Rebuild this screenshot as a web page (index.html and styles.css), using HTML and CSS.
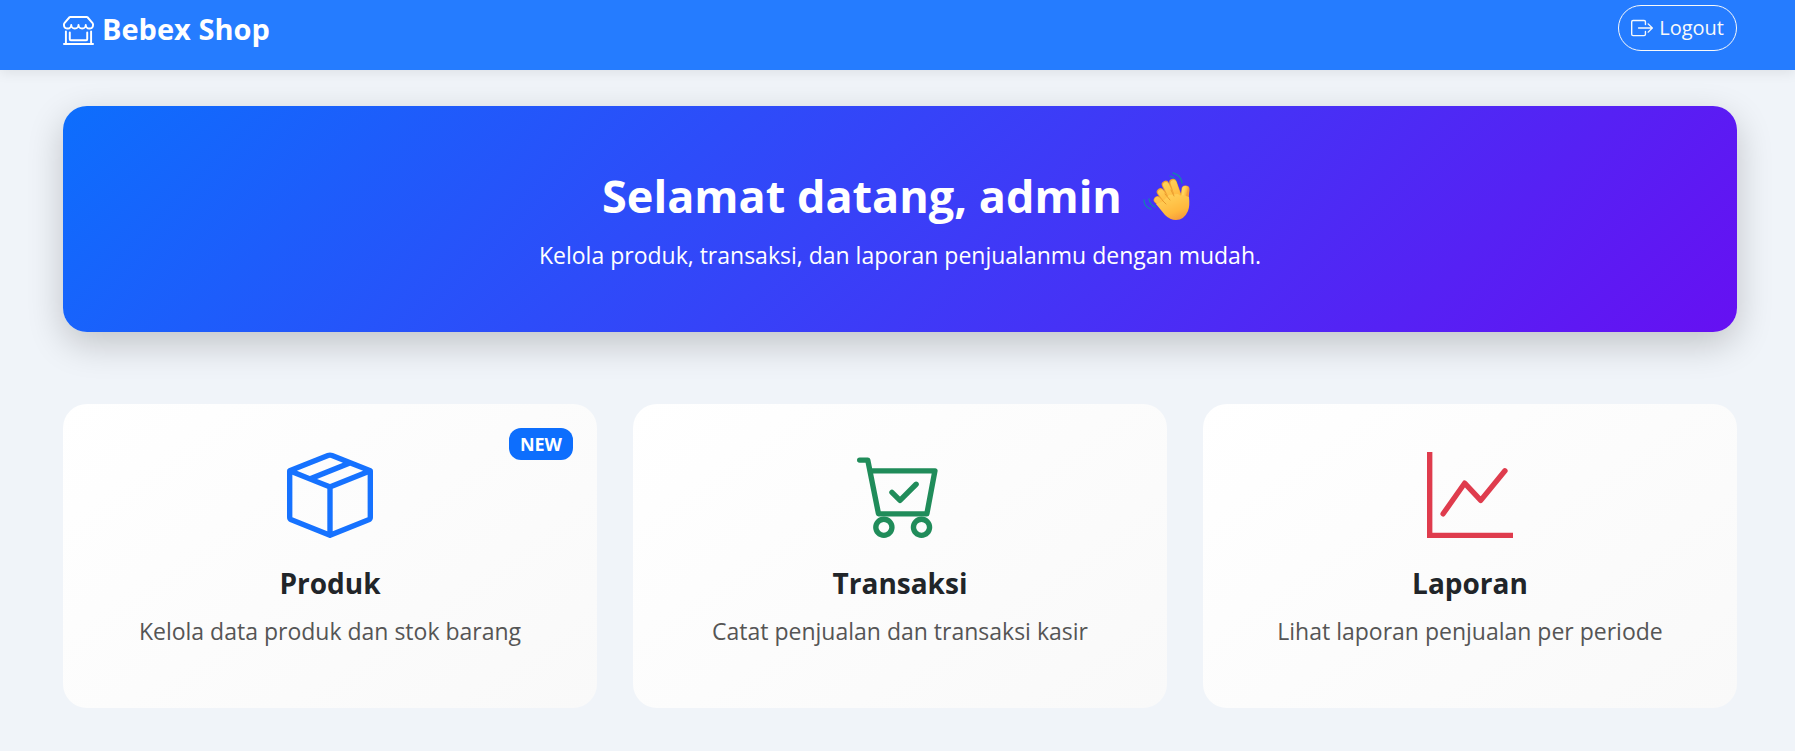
FILE: index.html
```html
<!DOCTYPE html>
<html lang="id">
<head>
<meta charset="utf-8">
<meta name="viewport" content="width=device-width, initial-scale=1">
<title>Bebex Shop</title>
<link rel="stylesheet" href="styles.css">
</head>
<body>
<header class="navbar">
  <a class="brand" href="#">
    <svg class="brand-icon" viewBox="0 0 16 16" fill="currentColor" aria-hidden="true"><path d="M2.97 1.35A1 1 0 0 1 3.73 1h8.54a1 1 0 0 1 .76.35l2.609 3.044A1.5 1.5 0 0 1 16 5.37v.255a2.375 2.375 0 0 1-4.25 1.458A2.37 2.37 0 0 1 9.875 8 2.37 2.37 0 0 1 8 7.083 2.37 2.37 0 0 1 6.125 8a2.37 2.37 0 0 1-1.875-.917A2.375 2.375 0 0 1 0 5.625V5.37a1.5 1.5 0 0 1 .361-.976zm1.78 4.275a1.375 1.375 0 0 0 2.75 0 .5.5 0 0 1 1 0 1.375 1.375 0 0 0 2.75 0 .5.5 0 0 1 1 0 1.375 1.375 0 1 0 2.75 0V5.37a.5.5 0 0 0-.12-.325L12.27 2H3.73L1.12 5.045A.5.5 0 0 0 1 5.37v.255a1.375 1.375 0 0 0 2.75 0 .5.5 0 0 1 1 0M1.5 8.5A.5.5 0 0 1 2 9v6h12V9a.5.5 0 0 1 1 0v6h.5a.5.5 0 0 1 0 1H.5a.5.5 0 0 1 0-1H1V9a.5.5 0 0 1 .5-.5m2 .5a.5.5 0 0 1 .5.5V13h8V9.5a.5.5 0 0 1 1 0V13a1 1 0 0 1-1 1H4a1 1 0 0 1-1-1V9.5a.5.5 0 0 1 .5-.5"/></svg>
    <span>Bebex Shop</span>
  </a>
  <a class="logout" href="#">
    <svg class="logout-icon" viewBox="0 0 16 16" fill="currentColor" aria-hidden="true"><path d="M10 12.5a.5.5 0 0 1-.5.5h-8a.5.5 0 0 1-.5-.5v-9a.5.5 0 0 1 .5-.5h8a.5.5 0 0 1 .5.5v2a.5.5 0 0 0 1 0v-2A1.5 1.5 0 0 0 9.5 2h-8A1.5 1.5 0 0 0 0 3.5v9A1.5 1.5 0 0 0 1.5 14h8a1.5 1.5 0 0 0 1.5-1.5v-2a.5.5 0 0 0-1 0z"/><path d="M15.854 8.354a.5.5 0 0 0 0-.708l-3-3a.5.5 0 0 0-.708.708L14.293 7.5H5.5a.5.5 0 0 0 0 1h8.793l-2.147 2.146a.5.5 0 0 0 .708.708z"/></svg>
    <span>Logout</span>
  </a>
</header>
<main class="content">
  <section class="hero">
    <h1 class="hero-title">Selamat datang, admin
      <svg class="wave" viewBox="0 0 48 48" role="img" aria-label="Melambaikan tangan">
        <defs>
          <linearGradient id="skin" x1="0.2" y1="0" x2="0.7" y2="1">
            <stop offset="0" stop-color="#ffd45c"/><stop offset="0.7" stop-color="#ffb83d"/><stop offset="1" stop-color="#f59a3c"/>
          </linearGradient>
        </defs>
        <g fill="none" stroke="#1580b0" stroke-width="1.3" stroke-linecap="round">
          <path d="M28 4q6 2 7 8M31 1q8 2 9 10M7 27q1 6 6 8M2 28q0 7 7 9"/>
        </g>
        <g stroke="#f0a032" stroke-linecap="round">
          <path d="M43.500 17.500L42 31" stroke-width="8"/>
          <path d="M31 10.500L37 27M23.500 12.500L32 30M18.500 20L29 34M15.500 28L27 38" stroke-width="7.500"/>
        </g>
        <g stroke="url(#skin)" stroke-linecap="round" fill="url(#skin)">
          <path d="M43.500 17.500L42 31" stroke-width="7"/>
          <path d="M31.500 11L37 27M24 13L32 30M19 20.500L29 34M15.500 28L27 38" stroke-width="6"/>
          <path stroke="none" d="M20 30L27 23L36 22Q39 25 41 23L47 25Q48 34 46 39Q42 48 34 48Q28 48 23 43L14 32Z"/>
        </g>
        <path d="M29 18l3 6M23 22l5 6M20 28l4 4" fill="none" stroke="#e99a2c" stroke-width="1" stroke-linecap="round"/>
      </svg>
    </h1>
    <p class="hero-text">Kelola produk, transaksi, dan laporan penjualanmu dengan mudah.</p>
  </section>
  <nav class="cards" aria-label="Menu utama">
    <a class="card" href="#">
      <span class="badge">NEW</span>
      <svg class="card-icon blue" viewBox="0 0 16 16" fill="currentColor" aria-hidden="true"><path d="M8.186 1.113a.5.5 0 0 0-.372 0L1.846 3.5l2.404.961L10.404 2zm3.564 1.426L5.596 5 8 5.961 14.154 3.5zm3.25 1.7-6.5 2.6v7.922l6.500-2.600V4.240zM7.500 14.762V6.838L1 4.239v7.923zM7.443.184a1.500 1.500 0 0 1 1.114 0l7.129 2.852A.5.5 0 0 1 16 3.500v8.662a1 1 0 0 1-.629.928l-7.185 2.874a.5.5 0 0 1-.372 0L.630 13.090a1 1 0 0 1-.630-.928V3.500a.5.5 0 0 1 .314-.464z"/></svg>
      <h2 class="card-title">Produk</h2>
      <p class="card-text">Kelola data produk dan stok barang</p>
    </a>
    <a class="card" href="#">
      <svg class="card-icon green" viewBox="0 0 16 16" fill="none" stroke="currentColor" stroke-linecap="round" stroke-linejoin="round" aria-hidden="true"><path d="M.5 1.500H2L4 11.500H13L14.500 3.500H2.400M6.500 7.500L8 9L11 6"/><circle cx="5" cy="14" r="1.500"/><circle cx="12" cy="14" r="1.500"/></svg>
      <h2 class="card-title">Transaksi</h2>
      <p class="card-text">Catat penjualan dan transaksi kasir</p>
    </a>
    <a class="card" href="#">
      <svg class="card-icon red" viewBox="0 0 16 16" fill="none" stroke="currentColor" aria-hidden="true"><path d="M.5 0V15.500H16"/><path d="M3 11.500L7 5.800L10 9L14.500 3.500" stroke-linecap="round" stroke-linejoin="round"/></svg>
      <h2 class="card-title">Laporan</h2>
      <p class="card-text">Lihat laporan penjualan per periode</p>
    </a>
  </nav>
</main>
</body>
</html>
```
FILE: styles.css
```css
* {
  box-sizing: border-box;
}

body {
  margin: 0;
  background: #f0f4f9;
  color: #212529;
  font-family: "Segoe UI", "Open Sans", "Noto Sans", sans-serif;
}

a {
  color: inherit;
  text-decoration: none;
}

h1, h2, p {
  margin: 0;
}

.navbar {
  position: relative;
  display: flex;
  align-items: center;
  justify-content: space-between;
  padding: 5px 58px 19px 63px;
  background: #257cff;
  box-shadow: 0 3px 12px rgba(0, 0, 0, 0.08);
  color: #fff;
}

.brand {
  display: flex;
  align-items: center;
  gap: 8px;
  padding-top: 2px;
  font-size: 29px;
  font-weight: 700;
  line-height: 44px;
}

.brand-icon {
  width: 31px;
  height: 31px;
}

.logout {
  display: flex;
  align-items: center;
  gap: 6px;
  padding: 0 12px;
  border: 1px solid #f8f9fa;
  border-radius: 24px;
  color: #f8f9fa;
  font-size: 20px;
  line-height: 44px;
}

.logout-icon {
  width: 22px;
  height: 22px;
}

.content {
  padding: 36px 58px 43px 63px;
}

.hero {
  padding: 61px 24px 59px;
  border-radius: 24px;
  background: linear-gradient(135deg, #0d6efd, #6610f2);
  box-shadow: 0 12px 36px rgba(0, 0, 0, 0.2);
  color: #fff;
  text-align: center;
}

.hero-title {
  display: flex;
  align-items: center;
  justify-content: center;
  gap: 20px;
  margin-bottom: 12px;
  font-size: 45px;
  line-height: 58px;
}

.wave {
  width: 48px;
  height: 48px;
  margin-right: 8px;
}

.hero-text {
  font-size: 23px;
  line-height: 36px;
}

.cards {
  display: grid;
  grid-template-columns: repeat(3, 1fr);
  gap: 36px;
  margin-top: 72px;
}

.card {
  position: relative;
  display: flex;
  flex-direction: column;
  align-items: center;
  padding: 48px 24px 59px;
  border-radius: 24px;
  background: linear-gradient(145deg, #fff, #f9f9f9);
  text-align: center;
}

.badge {
  position: absolute;
  top: 24px;
  right: 24px;
  padding: 0 11px;
  border-radius: 12px;
  background: #0d6efd;
  color: #fff;
  font-size: 18px;
  font-weight: 700;
  line-height: 32px;
}

.card-icon {
  width: 86px;
  height: 86px;
  margin-bottom: 27px;
}

.blue {
  color: #1672ff;
}

.green {
  color: #208c5a;
}

.red {
  color: #df3c4d;
}

.card-title {
  margin-bottom: 12px;
  font-size: 28px;
  line-height: 36px;
}

.card-text {
  color: #555;
  font-size: 23px;
  line-height: 36px;
}
```
